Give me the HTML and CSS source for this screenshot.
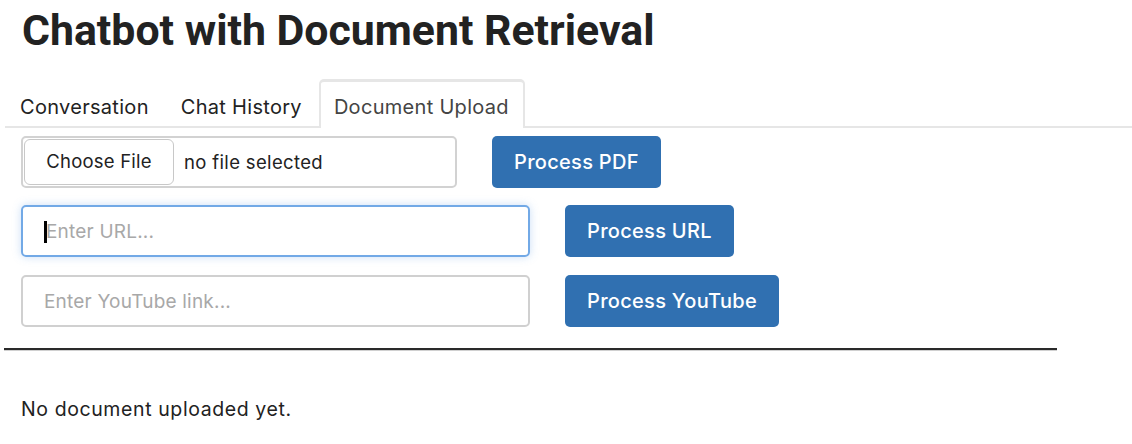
FILE: index.html
```html
<!DOCTYPE html>
<html>
<head>
<meta charset="utf-8">
<link rel="stylesheet" href="styles.css">
</head>
<body>
<h1 class="title">Chatbot with Document Retrieval</h1>
<div class="tabs">
  <div class="tab">Conversation</div>
  <div class="tab">Chat History</div>
  <div class="tab active">Document Upload</div>
</div>
<div class="panel">
  <div class="row">
    <div class="file-box">
      <span class="choose">Choose File</span>
      <span class="file-name">no file selected</span>
    </div>
    <button class="btn">Process PDF</button>
  </div>
  <div class="row">
    <div class="text-input focus"><span class="caret"></span><span class="ph">Enter URL...</span></div>
    <button class="btn">Process URL</button>
  </div>
  <div class="row">
    <div class="text-input"><span class="ph">Enter YouTube link...</span></div>
    <button class="btn">Process YouTube</button>
  </div>
</div>
<hr class="rule">
<p class="status">No document uploaded yet.</p>
</body>
</html>
```
FILE: styles.css
```css
* { box-sizing: border-box; }
html, body { margin: 0; padding: 0; background: #fff; }
body { font-family: Inter, "Noto Sans", sans-serif; color: #222; }

.title {
  margin: 0;
  padding: 5px 0 0 22px;
  height: 79px;
  font-family: Roboto, "Liberation Sans", sans-serif;
  font-weight: 700;
  font-size: 42.8px;
  line-height: 50px;
  color: #222;
}

.tabs {
  display: flex;
  margin-left: 5px;
  border-bottom: 2px solid #e6e6e6;
  height: 49px;
}
.tab {
  padding: 11px 13px 0 13px;
  margin-right: 2px;
  font-size: 20px;
  letter-spacing: 0.3px;
  line-height: 30px;
  color: #222;
  border: 2px solid transparent;
  border-bottom: none;
}
.tab.active {
  border-color: #e6e6e6;
  border-top-width: 3px;
  border-radius: 5px 5px 0 0;
  background: #fff;
  color: #444;
  margin-bottom: -2px;
  padding-top: 10px;
  padding-right: 14px;
}

.panel {
  padding: 8px 0 0 21px;
  display: flex;
  flex-direction: column;
  gap: 17px;
}
.row {
  display: flex;
  gap: 35px;
  align-items: flex-start;
}
.row:last-child { margin-top: 1px; }

.file-box {
  width: 436px;
  height: 52px;
  border: 2px solid #d2d2d2;
  border-radius: 5px;
  display: flex;
  align-items: flex-start;
  padding: 1px;
}
.choose {
  width: 150px;
  height: 46px;
  border: 1.5px solid #c8c8c8;
  border-radius: 6px;
  display: flex;
  align-items: center;
  justify-content: center;
  font-size: 18.5px;
  letter-spacing: 0.2px;
  color: #222;
  padding-bottom: 2px;
}
.file-name {
  margin-left: 10px;
  font-size: 18.5px;
  letter-spacing: 0.35px;
  line-height: 46px;
  color: #222;
}

.text-input {
  width: 509px;
  height: 52px;
  border: 2px solid #d0d0d0;
  border-radius: 5px;
  display: flex;
  align-items: center;
  padding-left: 21px;
  font-size: 19px;
  letter-spacing: 0.2px;
}
.text-input.focus {
  border-color: #72a9e6;
  box-shadow: 0 0 8px rgba(102, 160, 230, 0.35);
}
.caret {
  display: inline-block;
  width: 3px;
  height: 22px;
  background: #000;
  margin-right: -1px;
  margin-top: 1px;
}
.ph { color: #a8a8a8; }

.btn {
  height: 52px;
  border: none;
  border-radius: 5px;
  background: #3070b1;
  color: #fff;
  font-family: Inter, "Noto Sans", sans-serif;
  font-size: 20px;
  letter-spacing: 0.3px;
  font-weight: 500;
  padding: 0 22px;
  cursor: pointer;
}

.rule {
  margin: 21px 0 0 4px;
  width: 1053px;
  height: 3px;
  border: none;
  border-top: 2px solid #2a2a2a;
  border-bottom: 1px solid #d0d0d0;
}

.status {
  margin: 46px 0 0 21px;
  font-family: Inter, "Noto Sans", sans-serif;
  font-size: 19.5px;
  letter-spacing: 0.6px;
  color: #222;
}
```
